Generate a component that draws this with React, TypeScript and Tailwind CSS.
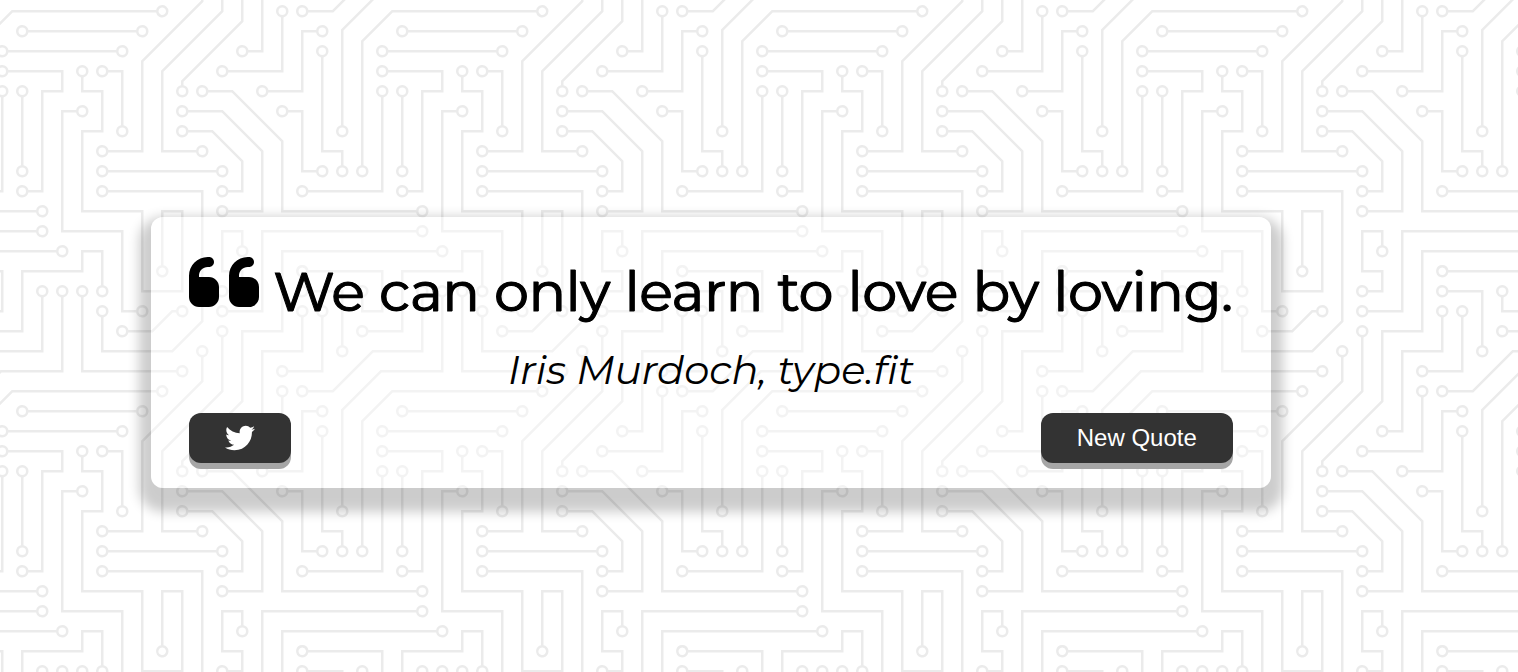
import { FaQuoteLeft, FaTwitter } from "react-icons/fa6";

const TRACES =
  "M44.1 224a5 5 0 1 1 0 2H0v-2h44.1zm160 48a5 5 0 1 1 0 2H82v-2h122.1zm57.8-46a5 5 0 1 1 0-2H304v2h-42.1zm0 16a5 5 0 1 1 0-2H304v2h-42.1zm6.2-114a5 5 0 1 1 0 2h-86.2a5 5 0 1 1 0-2h86.2zm-256-48a5 5 0 1 1 0 2H0v-2h12.1zm185.8 34a5 5 0 1 1 0-2h86.2a5 5 0 1 1 0 2h-86.2zM258 12.1a5 5 0 1 1-2 0V0h2v12.1zm-64 208a5 5 0 1 1-2 0v-54.2a5 5 0 1 1 2 0v54.2zm48-198.2V80h62v2h-64V21.9a5 5 0 1 1 2 0zm16 16V64h46v2h-48V37.9a5 5 0 1 1 2 0zm-128 96V208h16v12.1a5 5 0 1 1-2 0V210h-16v-76.1a5 5 0 1 1 2 0zm-5.9-21.9a5 5 0 1 1 0 2H114v48H85.9a5 5 0 1 1 0-2H112v-48h12.1zm-6.2 130a5 5 0 1 1 0-2H176v-74.1a5 5 0 1 1 2 0V242h-60.1zm-16-64a5 5 0 1 1 0-2H114v48h10.1a5 5 0 1 1 0 2H112v-48h-10.1zM66 284.1a5 5 0 1 1-2 0V274H50v30h-2v-32h18v12.1zM236.1 176a5 5 0 1 1 0 2H226v94h48v32h-2v-30h-48v-98h12.1zm25.8-30a5 5 0 1 1 0-2H274v44.1a5 5 0 1 1-2 0V146h-10.1zm-64 96a5 5 0 1 1 0-2H208v-80h16v-14h-42.1a5 5 0 1 1 0-2H226v18h-16v80h-12.1zm86.2-210a5 5 0 1 1 0 2H272V0h2v32h10.1zM98 101.9V146H53.9a5 5 0 1 1 0-2H96v-42.1a5 5 0 1 1 2 0zM53.9 34a5 5 0 1 1 0-2H80V0h2v34H53.9zm60.1 3.9V66H82v64H69.9a5 5 0 1 1 0-2H80V64h32V37.9a5 5 0 1 1 2 0zM101.9 82a5 5 0 1 1 0-2H128V37.9a5 5 0 1 1 2 0V82h-28.1zm16-64a5 5 0 1 1 0-2H146v44.1a5 5 0 1 1-2 0V18h-26.1zm102.2 270a5 5 0 1 1 0 2H98v14h-2v-16h124.1zM242 149.9V160h16v34h-16v62h48v48h-2v-46h-48v-66h16v-30h-16v-12.1a5 5 0 1 1 2 0zM53.9 18a5 5 0 1 1 0-2H64V2H48V0h18v18H53.9zm112 32a5 5 0 1 1 0-2H192V0h50v2h-48v48h-28.1zm-48-48a5 5 0 0 1-9.8-2h2.07a3 3 0 1 0 5.66 0H178v34h-18V21.9a5 5 0 1 1 2 0V32h14V2h-58.1zm0 96a5 5 0 1 1 0-2H137l32-32h39V21.9a5 5 0 1 1 2 0V66h-40.17l-32 32H117.9zm28.1 90.1a5 5 0 1 1-2 0v-76.51L175.59 80H224V21.9a5 5 0 1 1 2 0V82h-49.59L146 112.41v75.69zm16 32a5 5 0 1 1-2 0v-99.51L184.59 96H300.1a5 5 0 0 1 3.9-3.9v2.07a3 3 0 0 0 0 5.66v2.07a5 5 0 0 1-3.9-3.9H185.41L162 121.41v98.69zm-144-64a5 5 0 1 1-2 0v-3.51l48-48V48h32V0h2v50H66v55.41l-48 48v2.69zM50 53.9v43.51l-48 48V208h26.1a5 5 0 1 1 0 2H0v-65.41l48-48V53.9a5 5 0 1 1 2 0zm-16 16V89.41l-34 34v-2.82l32-32V69.9a5 5 0 1 1 2 0zM12.1 32a5 5 0 1 1 0 2H9.41L0 43.41V40.6L8.59 32h3.51zm265.8 18a5 5 0 1 1 0-2h18.69l7.41-7.41v2.82L297.41 50H277.9zm-16 160a5 5 0 1 1 0-2H288v-71.41l16-16v2.82l-14 14V210h-28.1zm-208 32a5 5 0 1 1 0-2H64v-22.59L40.59 194H21.9a5 5 0 1 1 0-2H41.41L66 216.59V242H53.9zm150.2 14a5 5 0 1 1 0 2H96v-56.6L56.6 162H37.9a5 5 0 1 1 0-2h19.5L98 200.6V256h106.1zm-150.2 2a5 5 0 1 1 0-2H80v-46.59L48.59 178H21.9a5 5 0 1 1 0-2H49.41L82 208.59V258H53.9zM34 39.8v1.61L9.41 66H0v-2h8.59L32 40.59V0h2v39.8zM2 300.1a5 5 0 0 1 3.9 3.9H3.83A3 3 0 0 0 0 302.17V256h18v48h-2v-46H2v42.1zM34 241v63h-2v-62H0v-2h34v1zM17 18H0v-2h16V0h2v18h-1zm273-2h14v2h-16V0h2v16zm-32 273v15h-2v-14h-14v14h-2v-16h18v1zM0 92.1A5.02 5.02 0 0 1 6 97a5 5 0 0 1-6 4.9v-2.07a3 3 0 1 0 0-5.66V92.1zM80 272h2v32h-2v-32zm37.9 32h-2.07a3 3 0 0 0-5.66 0h-2.07a5 5 0 0 1 9.8 0zM5.9 0A5.02 5.02 0 0 1 0 5.9V3.83A3 3 0 0 0 3.83 0H5.9zm294.2 0h2.07A3 3 0 0 0 304 3.83V5.9a5 5 0 0 1-3.9-5.9zm3.9 300.1v2.07a3 3 0 0 0-1.83 1.83h-2.07a5 5 0 0 1 3.9-3.9z";

// Pad centres on the 304-unit tile, grouped by row: [y, x, x, ...]
const PADS = [
  [17, 49, 113, 161, 209, 225, 241, 257],
  [33, 17, 49, 113, 129, 257, 289],
  [49, 49, 161, 273],
  [65, 33, 145],
  [81, 17, 97],
  [97, 97, 113],
  [113, 129, 193, 289],
  [129, 65, 129, 177, 273],
  [145, 49, 177, 241, 257],
  [161, 17, 33, 81, 177, 193],
  [177, 17, 97, 241],
  [193, 17, 145, 273],
  [209, 33, 257],
  [225, 49, 129, 145, 161, 193, 257],
  [241, 49, 113, 193, 257],
  [257, 49, 209],
  [273, 209],
  [289, 65, 225],
];

function CircuitBackdrop() {
  return (
    <svg aria-hidden="true" className="absolute inset-0 h-full w-full">
      <defs>
        <pattern
          id="circuit"
          width="304"
          height="304"
          patternUnits="userSpaceOnUse"
          patternTransform="translate(-219 -110) scale(1.25)"
        >
          <path d={TRACES} className="fill-[#ebebeb]" />
          {PADS.flatMap(([y, ...xs]) =>
            xs.map((x) => <circle key={`${x}-${y}`} cx={x} cy={y} r="3" className="fill-white" />),
          )}
        </pattern>
      </defs>
      <rect width="100%" height="100%" fill="url(#circuit)" />
    </svg>
  );
}

const buttonClass =
  "flex h-[50px] cursor-pointer items-center justify-center rounded-[12px] bg-[#333] text-white shadow-[0_6px_0_#a6a6a6]";

export default function App() {
  return (
    <div className="relative flex min-h-screen items-center justify-center overflow-hidden bg-white font-['Montserrat','Liberation_Sans',sans-serif] text-black">
      <CircuitBackdrop />
      <main className="relative mt-8 mr-24 rounded-[12px] bg-white/40 px-[38px] pt-10 pb-[25px] shadow-[0_12px_12px_12px_rgba(0,0,0,0.2)]">
        <blockquote className="flex h-[70px] items-center gap-[14px] text-[55px] leading-[70px]">
          <FaQuoteLeft aria-hidden="true" className="mb-5 h-20 w-[70px] shrink-0" />
          <p className="pt-px [-webkit-text-stroke:1px_black] [text-shadow:1px_0_0_black]">
            We can only learn to love by loving.
          </p>
        </blockquote>
        <p className="mt-[18px] text-center text-[40px] leading-[50px] italic">Iris Murdoch, type.fit</p>
        <div className="mt-[18px] flex justify-between">
          <a href="https://twitter.com/intent/tweet" aria-label="Tweet this quote" className={`${buttonClass} w-[102px]`}>
            <FaTwitter aria-hidden="true" className="size-[30px]" />
          </a>
          <button type="button" className={`${buttonClass} w-48 text-[24px] font-['Liberation_Sans',Arial,sans-serif]`}>
            New Quote
          </button>
        </div>
      </main>
    </div>
  );
}
